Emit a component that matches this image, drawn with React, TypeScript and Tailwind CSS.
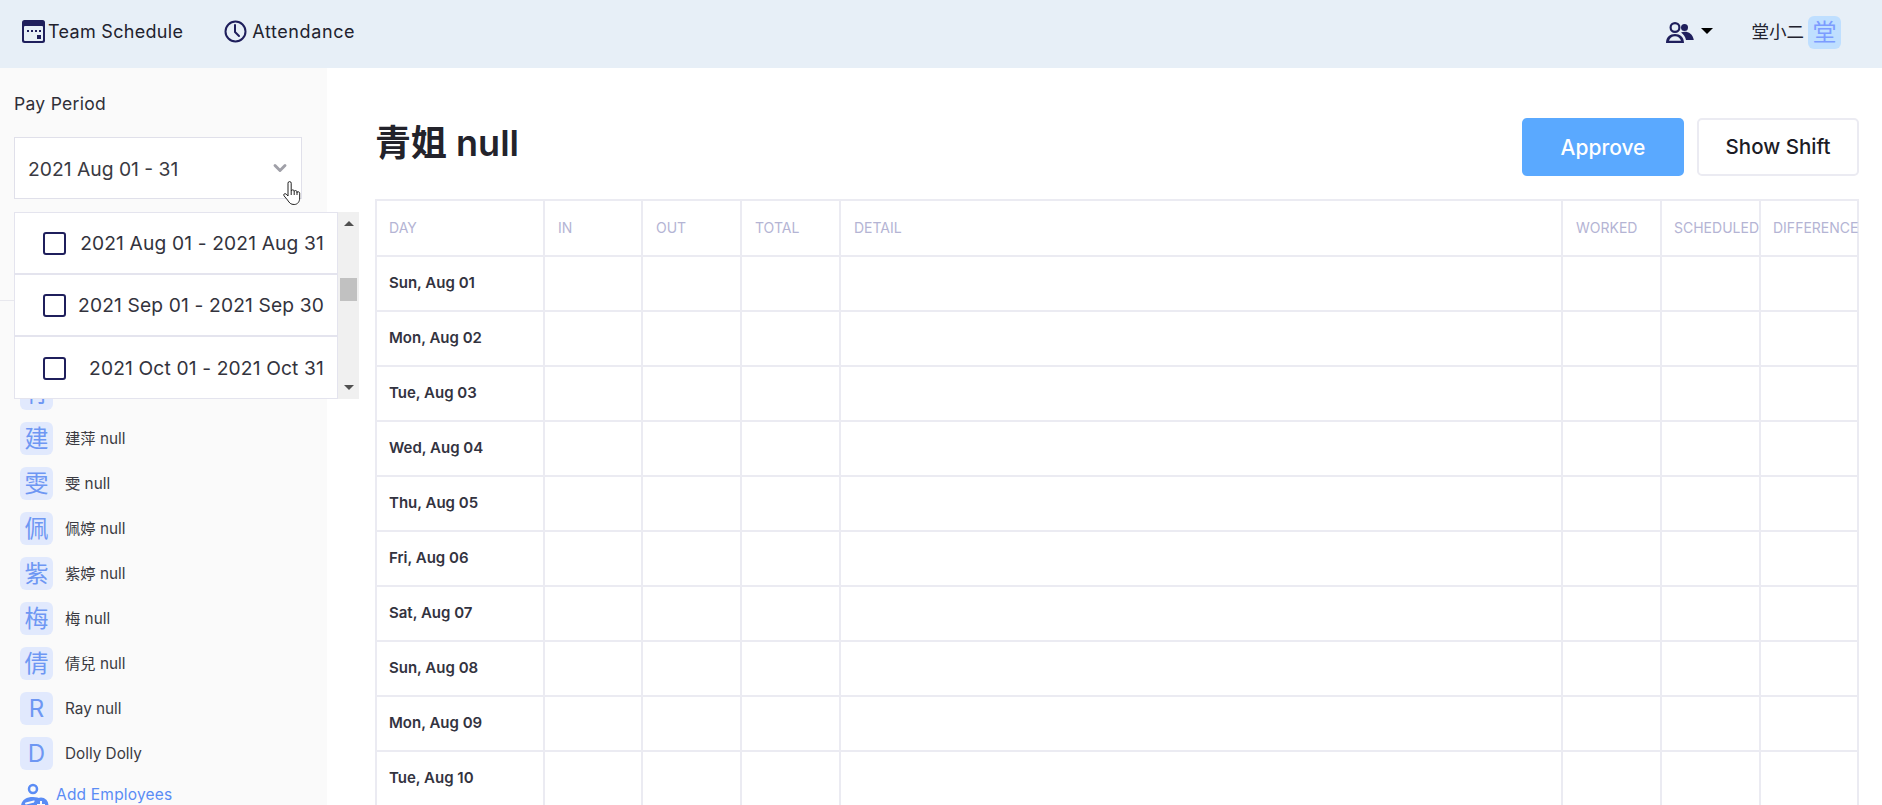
import { ChevronDown } from "lucide-react";

const cjk = "font-['Inter','Noto_Sans_CJK_TC',sans-serif]";

const employees = [
  { icon: "建", name: "建萍 null" },
  { icon: "雯", name: "雯 null" },
  { icon: "佩", name: "佩婷 null" },
  { icon: "紫", name: "紫婷 null" },
  { icon: "梅", name: "梅 null" },
  { icon: "倩", name: "倩兒 null" },
  { icon: "R", name: "Ray null" },
  { icon: "D", name: "Dolly Dolly" },
];

const periods = [
  "2021 Aug 01 - 2021 Aug 31",
  "2021 Sep 01 - 2021 Sep 30",
  "2021 Oct 01 - 2021 Oct 31",
];

const days = [
  "Sun, Aug 01",
  "Mon, Aug 02",
  "Tue, Aug 03",
  "Wed, Aug 04",
  "Thu, Aug 05",
  "Fri, Aug 06",
  "Sat, Aug 07",
  "Sun, Aug 08",
  "Mon, Aug 09",
  "Tue, Aug 10",
];

const columns = ["DAY", "IN", "OUT", "TOTAL", "DETAIL", "WORKED", "SCHEDULED", "DIFFERENCE"];
const gridCols = "grid grid-cols-[168px_98px_99px_99px_722px_99px_99px_98px]";

function CalendarIcon() {
  return (
    <svg width="23" height="23" viewBox="0 0 23 23">
      <rect x="0" y="0" width="23" height="23" rx="2.5" fill="#1f1f5c" />
      <rect x="2" y="6" width="19" height="15" rx="1" fill="#e7eff7" />
      <rect x="5" y="10" width="2" height="2" fill="#1f1f5c" />
      <rect x="9" y="10" width="2" height="2" fill="#1f1f5c" />
      <rect x="13" y="10" width="2" height="2" fill="#1f1f5c" />
      <rect x="17" y="10" width="2" height="2" fill="#1f1f5c" />
      <rect x="15" y="15" width="4" height="4" fill="#1f1f5c" />
    </svg>
  );
}

function ClockIcon() {
  return (
    <svg width="23" height="23" viewBox="0 0 23 23" fill="none" stroke="#1f1f5c" strokeWidth="2">
      <circle cx="11.5" cy="11.5" r="10" />
      <path d="M11 5v7l4 4" strokeLinecap="round" strokeLinejoin="round" />
    </svg>
  );
}

function UsersIcon() {
  return (
    <svg width="28" height="21" viewBox="0 0 28 21" fill="#1f1f5c">
      <circle cx="18.5" cy="5.5" r="3.5" />
      <path d="M15 10.5c5-2 11.5 0 12.8 7.5H20c-.6-3-2.400-5.700-5-7.500z" />
      <path fillRule="evenodd" d="M9 0a5.500 5.500 0 1 1 0 11A5.500 5.500 0 0 1 9 0zm0 2.200a3.300 3.300 0 1 0 0 6.600 3.300 3.300 0 0 0 0-6.600z" />
      <path fillRule="evenodd" d="M0 21c0-6 4-9 9-9s9 3 9 9H0zm3-2.200h12c-.8-2.800-3-4.600-6-4.600s-5.200 1.800-6 4.600z" />
    </svg>
  );
}

function AddEmployeeIcon() {
  return (
    <svg width="28" height="32" viewBox="0 0 28 32" fill="none">
      <circle cx="12" cy="6" r="4" stroke="#5a8cf5" strokeWidth="2.500" />
      <path d="M0 24c0-7 5-10 12-10 3 0 6 .7 8 2v8H0z" fill="#5a8cf5" />
      <path d="M5 20.500l8-2" stroke="#fafafa" strokeWidth="2" strokeLinecap="round" />
      <circle cx="20" cy="22" r="7.500" fill="#5a8cf5" />
      <path d="M20 18v8M16 22h8" stroke="#fafafa" strokeWidth="2" />
    </svg>
  );
}

function HandCursor() {
  return (
    <svg
      width="18"
      height="25"
      viewBox="0 0 18 25"
      fill="#fff"
      stroke="#222"
      strokeWidth="1"
      strokeLinejoin="round"
      className="absolute left-[268px] top-[43px] z-20"
    >
      <path d="M5 2.200a1.600 1.600 0 0 1 3.200 0V10c0-1.500 3-1.500 3 0v.5c0-1.300 2.800-1.300 2.800.3v.7c0-1.200 2.700-1 2.700.7V17c0 3.500-2 6.500-5.500 6.500S6.500 22 4.500 19L1 14.800c-1-1.300.8-3 2.200-1.700L5 15V2.200z" />
      <path d="M8.200 10v4M11.200 10.500v3.500M14 11v3" fill="none" />
    </svg>
  );
}

function Avatar({ children }: { children: string }) {
  return (
    <div className="flex h-[33px] w-[33px] shrink-0 items-center justify-center rounded-md bg-[#e1e9fd] text-[24px] leading-none text-[#6e97f3]">
      {children}
    </div>
  );
}

function PeriodDropdown() {
  return (
    <div className="absolute left-[14px] top-[144px] z-10 flex h-[187px]">
      <div className="w-[324px] border border-[#e4e4ee] bg-white">
        {periods.map((period, i) => (
          <div
            key={period}
            className={`flex h-[62px] items-center justify-between pl-[28px] pr-[13px] ${i < 2 ? "border-b-2 border-[#e4e4ee]" : ""}`}
          >
            <span className="h-[23px] w-[23px] rounded-[3px] border-2 border-[#1f1f5c]" />
            <span className="text-[19.200px] tracking-[0.15px] text-[#33333d]">{period}</span>
          </div>
        ))}
      </div>
      <div className="relative w-[21px] bg-[#f0f0f0]">
        <div className="absolute left-1/2 top-[9px] h-0 w-0 -translate-x-1/2 border-x-[5px] border-b-[5px] border-x-transparent border-b-[#505050]" />
        <div className="absolute left-[2px] top-[66px] h-[23px] w-[17px] bg-[#c1c1c1]" />
        <div className="absolute bottom-[9px] left-1/2 h-0 w-0 -translate-x-1/2 border-x-[5px] border-t-[5px] border-x-transparent border-t-[#505050]" />
      </div>
    </div>
  );
}

function Sidebar() {
  return (
    <aside className="relative w-[327px] shrink-0 bg-[#fafafa]">
      <div className="h-[233px] border-b border-[#e8e8ee] px-[14px] pt-[24px]">
        <div className="text-[17.500px] leading-[24px] tracking-[0.3px] text-[#2f2f38]">Pay Period</div>
        <div className="relative mt-[21px] flex h-[62px] w-[288px] items-center justify-between border border-[#e0e0ea] bg-white pl-[13px] pr-[11px]">
          <span className="pt-[2px] text-[19.300px] text-[#3a3a42]">2021 Aug 01 - 31</span>
          <ChevronDown className="h-[20px] w-[20px] text-[#a0a0a8]" strokeWidth={3.500} />
          <HandCursor />
        </div>
      </div>
      <PeriodDropdown />
      <div className="flex flex-col gap-[12px] pl-[20px] pt-[76px]">
        <Avatar>竹</Avatar>
        {employees.map((e) => (
          <div key={e.name} className="flex items-center gap-[12px]">
            <Avatar>{e.icon}</Avatar>
            <span className="pt-[1px] text-[15.300px] text-[#3a3a42]">{e.name}</span>
          </div>
        ))}
        <div className="mt-[1px] flex items-start gap-[7px] pl-[1px]">
          <AddEmployeeIcon />
          <span className="text-[15.500px] leading-[24px] tracking-[0.2px] text-[#5a8cf5]">Add Employees</span>
        </div>
      </div>
    </aside>
  );
}

function ScheduleTable() {
  return (
    <div className="mt-[23px] w-[1484px] border-l-2 border-t-2 border-[#ebebf2]">
      <div className={`${gridCols} h-[56px] border-b-2 border-[#ebebf2]`}>
        {columns.map((col, i) => (
          <div
            key={col}
            className={`flex items-center border-r-2 border-[#ebebf2] pb-[2px] text-[14px] text-[#b4b4d4] ${i === 0 || i >= 6 ? "pl-[12px]" : "pl-[13px]"}`}
          >
            {col}
          </div>
        ))}
      </div>
      {days.map((day) => (
        <div key={day} className={`${gridCols} h-[55px] border-b-2 border-[#ebebf2]`}>
          <div className="flex items-center border-r-2 border-[#ebebf2] pb-[1px] pl-[12px] text-[15px] font-semibold text-[#33333f]">
            {day}
          </div>
          {columns.slice(1).map((col) => (
            <div key={col} className="border-r-2 border-[#ebebf2]" />
          ))}
        </div>
      ))}
    </div>
  );
}

export default function App() {
  return (
    <div className={`flex h-[805px] flex-col overflow-hidden bg-white ${cjk}`}>
      <header className="flex h-[68px] shrink-0 items-center justify-between bg-[#e7eff7] pb-[3px] pl-[22px] pr-[41px]">
        <nav className="mb-[2px] flex items-center gap-[41px] text-[18px] text-[#22222e]">
          <div className="flex items-center gap-[3px] tracking-[0.3px]">
            <CalendarIcon />
            Team Schedule
          </div>
          <div className="flex items-center gap-[5px] tracking-[0.6px]">
            <ClockIcon />
            Attendance
          </div>
        </nav>
        <div className="flex items-center">
          <UsersIcon />
          <div className="ml-[7px] h-0 w-0 -translate-y-[2px] border-x-[6px] border-t-[6px] border-x-transparent border-t-black" />
          <span className="ml-[39px] text-[17.500px] text-[#22222e]">堂小二</span>
          <div className="ml-[4px] flex h-[33px] w-[33px] items-center justify-center rounded-md bg-[#bfdfff] text-[24px] leading-none text-[#7c9cff]">
            堂
          </div>
        </div>
      </header>
      <div className="flex min-h-0 flex-1">
        <Sidebar />
        <main className="flex-1 pl-[48px] pt-[50px]">
          <div className="flex w-[1484px] items-start justify-between">
            <h1 className="text-[36px] font-semibold leading-[50px] text-[#23232b]">青姐 null</h1>
            <div className="flex gap-[13px]">
              <button className="h-[58px] w-[162px] rounded-[5px] bg-[#5aa9ff] pt-[1px] text-[21px] font-medium text-white">Approve</button>
              <button className="h-[58px] w-[162px] rounded-[5px] border-2 border-[#ebebf2] bg-white text-[20.500px] font-medium text-[#1c1c26]">Show Shift</button>
            </div>
          </div>
          <ScheduleTable />
        </main>
      </div>
    </div>
  );
}
